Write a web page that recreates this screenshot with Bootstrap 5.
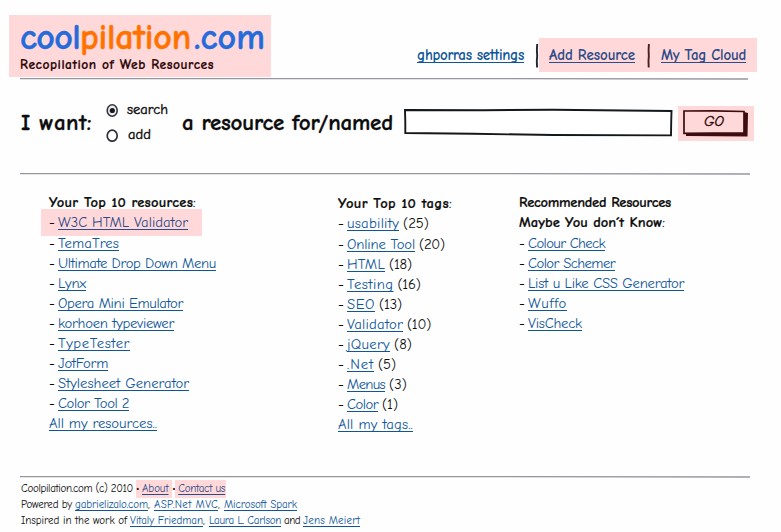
<!DOCTYPE html>
<html lang="en">
<head>
<meta charset="utf-8">
<title>coolpilation.com</title>
<link href="https://cdn.jsdelivr.net/npm/bootstrap@5.3.0/dist/css/bootstrap.min.css" rel="stylesheet">
<style>
body{width:781px;height:532px;overflow:hidden;background:#fefefe;color:#0c0c0c;font-family:"Comic Sans MS","Comic Neue",Inter,"Open Sans",sans-serif;font-size:14.7px;line-height:20px}
a{color:#0f5699;text-decoration:underline;text-decoration-thickness:1px;text-underline-offset:2px;text-decoration-skip-ink:none}
[data-w]{display:inline-block;white-space:pre}
.hot{background:#ffd9d9;color:#2b0508}
.hot a{color:#2d4a88}
.top-area{height:78px;padding:15px 24px 0 9px}
.brand{width:262px;height:62px;padding:4px 0 0 11px}
.brand-name{font-size:36px;font-weight:700;line-height:38px;color:#256bdb;white-space:nowrap;-webkit-text-stroke:.4px}
.brand-name b{color:#ff7200;font-weight:700}
.brand-name .tld{margin-left:3px}
.tagline{font-size:13.5px;font-weight:700;line-height:15px;-webkit-text-stroke:.2px}
.menu{height:34px;margin-top:23px;font-weight:600;font-size:15px}
.menu a{display:block}
.menu-hot{width:218px;height:34px;padding:0 11px 0 10px}
.stroke{display:block;height:2px;margin-left:20px;width:730px}
.ask{height:93px;padding-left:21px;font-size:23px;font-weight:600;-webkit-text-stroke:.3px}
.ask .big{height:24px;line-height:24px;margin-top:31px}
.ask .named{margin-left:13px}
.opts{margin:20px 0 0 14px;width:63px;font-size:14.5px;font-weight:500;-webkit-text-stroke:.4px}
.opts label{height:20px;margin-bottom:5px}
.field{margin:27px 0 0 10px;position:relative;width:270px;height:31px}
.field input{position:absolute;inset:3px;border:0;background:none;outline:0;width:262px}
.field svg{display:block}
.go{position:relative;margin:26px 0 0 5px;width:76px;height:35px;padding:0;border:0;font-size:14.7px;font-weight:500;-webkit-text-stroke:.4px}
.go svg{position:absolute;left:0;top:0}
.go span{position:relative;left:-2px;top:-2px;font-style:italic}
.lists{height:301px;padding:18px 0 0 49px}
.c1{width:289px}.c2{width:181px;padding-top:1px}
.c3 ul{padding-top:1px}
.lists h2{font-size:14.5px;line-height:20px;font-weight:600;margin:0;-webkit-text-stroke:.2px}
.lists h2 i{font-style:normal;font-weight:400}
.lists li{height:20px;display:flex}
.c2 li:first-child{height:21px}
.lists li::before{content:"-";width:9px;flex:none}
.lists li.hot{width:161px;height:27px;margin:-4px 0 -2px -8px;padding:4px 0 0 8px}
.lists li em{font-style:normal;margin-left:4px}
.foot{padding:3px 0 0 21px;font-size:11px;line-height:16px}
.foot .line{height:16px;gap:3px}
.foot .hot{height:18px;margin-top:-1px;padding-top:1px}
.foot .dot{margin-left:-3px}
.foot .contact{margin-left:-3px;padding:1px 1px 0 3px}
</style>
<script src="https://cdn.jsdelivr.net/npm/bootstrap@5.3.0/dist/js/bootstrap.bundle.min.js"></script>
</head>
<body>
<header class="top-area d-flex justify-content-between">
  <div class="brand hot">
    <div class="brand-name"><span data-w="60">cool</span><b data-w="111">pilation</b><span class="tld" data-w="71">.com</span></div>
    <div class="tagline"><span data-w="194">Recopilation of Web Resources</span></div>
  </div>
  <nav class="menu d-flex align-items-center">
    <a href="#" data-w="107">ghporras settings</a>
    <svg class="ms-2" width="7" height="34" overflow="visible"><path d="M5.2 6L4.9 12L5.2 18L4.8 23L5.1 29.5" fill="none" stroke="#202530" stroke-width="1.9"/></svg>
    <div class="menu-hot hot d-flex align-items-center justify-content-between">
      <a href="#" data-w="86">Add Resource</a>
      <svg width="4" height="34"><path d="M2.9 6L2.6 12L2.8 18L2.5 23L2.7 29.5" fill="none" stroke="#4c1c25" stroke-width="1.9"/></svg>
      <a href="#" data-w="85">My Tag Cloud</a>
    </div>
  </nav>
</header>
<svg class="stroke" viewBox="0 0 730 2"><path d="M0 .5H300L728 1" stroke="#96969f" stroke-width="1.3"/></svg>
<form class="ask d-flex align-items-start">
  <span class="big"><span data-w="71">I want:</span></span>
  <div class="opts">
    <label class="d-flex align-items-center"><svg class="me-2" width="13" height="14"><ellipse cx="6.2" cy="7.5" rx="5" ry="5.7" fill="#eee" stroke="#363640" stroke-width="1.6"/><circle cx="6.3" cy="7.5" r="2.6" fill="#17171c"/></svg><span data-w="41">search</span></label>
    <label class="d-flex align-items-center"><svg class="me-2" width="14" height="14"><ellipse cx="6.2" cy="7.7" rx="5" ry="5.5" fill="#fff" stroke="#30303b" stroke-width="1.7"/></svg><span data-w="23">add</span></label>
  </div>
  <span class="big named"><span data-w="211">a resource for/named</span></span>
  <div class="field"><svg width="270" height="31"><path d="M2 3L80 3.2L150 2.8L268.5 4L268.2 15L268 28.4L150 28L70 26.8L2.3 26L2.3 15Z" fill="#fff" stroke="#15181b" stroke-width="1.9"/></svg><input aria-label="Resource"></div>
  <button type="button" class="go hot"><svg width="76" height="35"><path d="M66 6L70 7L69.5 30.5L8 30L8 27L66 27Z" fill="#3d0b10"/><path d="M6 5L35 4.8L66 5.5L66 27.2L35 27L6 27.3Z" fill="#ffd9d9" stroke="#3d0b10" stroke-width="1.7"/></svg><span data-w="20">GO</span></button>
</form>
<svg class="stroke" viewBox="0 0 730 2"><path d="M0 .5H300L730 1" stroke="#96969f" stroke-width="1.3"/></svg>
<main class="lists d-flex">
  <section class="c1">
    <h2><span data-w="147">Your Top 10 resources<i>:</i></span></h2>
    <ul class="list-unstyled mb-0">
      <li class="hot"><a href="#" data-w="130">W3C HTML Validator</a></li>
      <li><a href="#" data-w="61">TemaTres</a></li>
      <li><a href="#" data-w="158">Ultimate Drop Down Menu</a></li>
      <li><a href="#" data-w="28">Lynx</a></li>
      <li><a href="#" data-w="125">Opera Mini Emulator</a></li>
      <li><a href="#" data-w="116">korhoen typeviewer</a></li>
      <li><a href="#" data-w="72">TypeTester</a></li>
      <li><a href="#" data-w="50">JotForm</a></li>
      <li><a href="#" data-w="131">Stylesheet Generator</a></li>
      <li><a href="#" data-w="71">Color Tool 2</a></li>
    </ul>
    <a href="#" data-w="108">All my resources..</a>
  </section>
  <section class="c2">
    <h2><span data-w="114">Your Top 10 tags<i>:</i></span></h2>
    <ul class="list-unstyled mb-0">
      <li><a href="#" data-w="52">usability</a><em data-w="26">(25)</em></li>
      <li><a href="#" data-w="68">Online Tool</a><em data-w="26">(20)</em></li>
      <li><a href="#" data-w="38">HTML</a><em data-w="23">(18)</em></li>
      <li><a href="#" data-w="46.5">Testing</a><em data-w="23">(16)</em></li>
      <li><a href="#" data-w="28">SEO</a><em data-w="23">(13)</em></li>
      <li><a href="#" data-w="56">Validator</a><em data-w="24">(10)</em></li>
      <li><a href="#" data-w="43">jQuery</a><em data-w="18">(8)</em></li>
      <li><a href="#" data-w="27">.Net</a><em data-w="18">(5)</em></li>
      <li><a href="#" data-w="38">Menus</a><em data-w="18">(3)</em></li>
      <li><a href="#" data-w="31">Color</a><em data-w="16">(1)</em></li>
    </ul>
    <a href="#" data-w="75">All my tags..</a>
  </section>
  <section class="c3">
    <h2><span data-w="152">Recommended Resources</span><br><span data-w="146">Maybe You don´t Know<i>:</i></span></h2>
    <ul class="list-unstyled mb-0">
      <li><a href="#" data-w="77">Colour Check</a></li>
      <li><a href="#" data-w="87">Color Schemer</a></li>
      <li><a href="#" data-w="156">List u Like CSS Generator</a></li>
      <li><a href="#" data-w="39">Wuffo</a></li>
      <li><a href="#" data-w="54">VisCheck</a></li>
    </ul>
  </section>
</main>
<svg class="stroke" viewBox="0 0 730 2"><path d="M0 .5H300L730 1" stroke="#96969f" stroke-width="1.3"/></svg>
<footer class="foot">
  <div class="line d-flex"><span data-w="112">Coolpilation.com (c) 2010</span><span class="hot d-flex"><span data-w="6">•</span><a href="#" data-w="26.5">About</a><span>&nbsp;</span></span><span class="dot" data-w="3">•</span><span class="hot contact"><a href="#" data-w="47">Contact us</a></span></div>
  <div class="line d-flex"><span data-w="51">Powered by</span><span><a href="#" data-w="73">gabrielizalo.com</a><span data-w="3">,</span></span><span><a href="#" data-w="64">ASP.Net MVC</a><span data-w="3">,</span></span><a href="#" data-w="73">Microsoft Spark</a></div>
  <div class="line d-flex"><span data-w="106">Inspired in the work of</span><span><a href="#" data-w="73">Vitaly Friedman</a><span data-w="3">,</span></span><a href="#" data-w="72">Laura L. Carlson</a><span data-w="16">and</span><a href="#" data-w="57">Jens Meiert</a></div>
</footer>
<script>
// Track each label so that it fills its measure.
document.querySelectorAll('[data-w]').forEach(function (el) {
  var w = parseFloat(el.dataset.w), n = el.textContent.length;
  var natural = el.getBoundingClientRect().width;
  el.style.letterSpacing = ((w - natural) / n) + 'px';
  el.style.width = w + 'px';
});
</script>
</body>
</html>
